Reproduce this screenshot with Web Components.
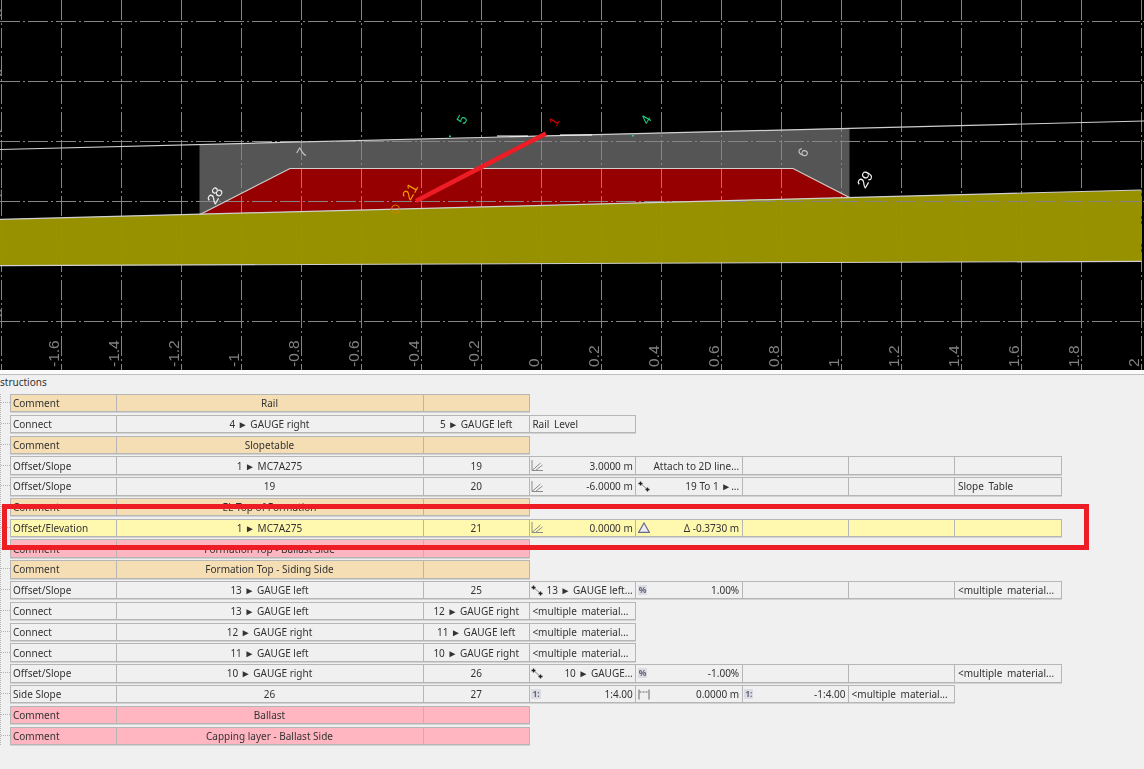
<!DOCTYPE html>
<html>
<head>
<meta charset="utf-8">
<title>Instructions</title>
<style>
  html, body { margin: 0; height: 100%; }
  body {
    background: #f0f0f0;
    overflow: hidden;
    font-family: "Noto Sans", "Open Sans", sans-serif;
  }
</style>
</head>
<body>
<section-viewport></section-viewport>
<instruction-panel heading="structions">
  <instruction-row tone="comment"><instruction-cell kind="first">Comment</instruction-cell><instruction-cell kind="wide">Rail</instruction-cell><instruction-cell></instruction-cell></instruction-row>
  <instruction-row><instruction-cell kind="first">Connect</instruction-cell><instruction-cell kind="wide">4 ► GAUGE right</instruction-cell><instruction-cell>5 ► GAUGE left</instruction-cell><instruction-cell kind="note">Rail Level</instruction-cell></instruction-row>
  <instruction-row tone="comment"><instruction-cell kind="first">Comment</instruction-cell><instruction-cell kind="wide">Slopetable</instruction-cell><instruction-cell></instruction-cell></instruction-row>
  <instruction-row><instruction-cell kind="first">Offset/Slope</instruction-cell><instruction-cell kind="wide">1 ► MC7A275</instruction-cell><instruction-cell>19</instruction-cell><instruction-cell kind="value" icon="slope">3.0000 m</instruction-cell><instruction-cell kind="value">Attach to 2D line...</instruction-cell><instruction-cell></instruction-cell><instruction-cell></instruction-cell><instruction-cell></instruction-cell></instruction-row>
  <instruction-row><instruction-cell kind="first">Offset/Slope</instruction-cell><instruction-cell kind="wide">19</instruction-cell><instruction-cell>20</instruction-cell><instruction-cell kind="value" icon="slope">-6.0000 m</instruction-cell><instruction-cell kind="value" icon="nodes">19 To 1 ►...</instruction-cell><instruction-cell></instruction-cell><instruction-cell></instruction-cell><instruction-cell kind="note">Slope Table</instruction-cell></instruction-row>
  <instruction-row tone="comment"><instruction-cell kind="first">Comment</instruction-cell><instruction-cell kind="wide">EL Top of Formation</instruction-cell><instruction-cell></instruction-cell></instruction-row>
  <instruction-row tone="selected"><instruction-cell kind="first">Offset/Elevation</instruction-cell><instruction-cell kind="wide">1 ► MC7A275</instruction-cell><instruction-cell>21</instruction-cell><instruction-cell kind="value" icon="slope">0.0000 m</instruction-cell><instruction-cell kind="value" icon="delta">Δ -0.3730 m</instruction-cell><instruction-cell></instruction-cell><instruction-cell></instruction-cell><instruction-cell></instruction-cell></instruction-row>
  <instruction-row tone="pink"><instruction-cell kind="first">Comment</instruction-cell><instruction-cell kind="wide">Formation Top - Ballast Side</instruction-cell><instruction-cell></instruction-cell></instruction-row>
  <instruction-row tone="comment"><instruction-cell kind="first">Comment</instruction-cell><instruction-cell kind="wide">Formation Top - Siding Side</instruction-cell><instruction-cell></instruction-cell></instruction-row>
  <instruction-row><instruction-cell kind="first">Offset/Slope</instruction-cell><instruction-cell kind="wide">13 ► GAUGE left</instruction-cell><instruction-cell>25</instruction-cell><instruction-cell kind="value" icon="nodes">13 ► GAUGE left...</instruction-cell><instruction-cell kind="value" icon="percent">1.00%</instruction-cell><instruction-cell></instruction-cell><instruction-cell></instruction-cell><instruction-cell kind="note">&lt;multiple material...</instruction-cell></instruction-row>
  <instruction-row><instruction-cell kind="first">Connect</instruction-cell><instruction-cell kind="wide">13 ► GAUGE left</instruction-cell><instruction-cell>12 ► GAUGE right</instruction-cell><instruction-cell kind="note">&lt;multiple material...</instruction-cell></instruction-row>
  <instruction-row><instruction-cell kind="first">Connect</instruction-cell><instruction-cell kind="wide">12 ► GAUGE right</instruction-cell><instruction-cell>11 ► GAUGE left</instruction-cell><instruction-cell kind="note">&lt;multiple material...</instruction-cell></instruction-row>
  <instruction-row><instruction-cell kind="first">Connect</instruction-cell><instruction-cell kind="wide">11 ► GAUGE left</instruction-cell><instruction-cell>10 ► GAUGE right</instruction-cell><instruction-cell kind="note">&lt;multiple material...</instruction-cell></instruction-row>
  <instruction-row><instruction-cell kind="first">Offset/Slope</instruction-cell><instruction-cell kind="wide">10 ► GAUGE right</instruction-cell><instruction-cell>26</instruction-cell><instruction-cell kind="value" icon="nodes">10 ► GAUGE...</instruction-cell><instruction-cell kind="value" icon="percent">-1.00%</instruction-cell><instruction-cell></instruction-cell><instruction-cell></instruction-cell><instruction-cell kind="note">&lt;multiple material...</instruction-cell></instruction-row>
  <instruction-row><instruction-cell kind="first">Side Slope</instruction-cell><instruction-cell kind="wide">26</instruction-cell><instruction-cell>27</instruction-cell><instruction-cell kind="value" icon="ratio">1:4.00</instruction-cell><instruction-cell kind="value" icon="width">0.0000 m</instruction-cell><instruction-cell kind="value" icon="ratio">-1:4.00</instruction-cell><instruction-cell kind="note">&lt;multiple material...</instruction-cell></instruction-row>
  <instruction-row tone="pink"><instruction-cell kind="first">Comment</instruction-cell><instruction-cell kind="wide">Ballast</instruction-cell><instruction-cell></instruction-cell></instruction-row>
  <instruction-row tone="pink" last><instruction-cell kind="first">Comment</instruction-cell><instruction-cell kind="wide">Capping layer - Ballast Side</instruction-cell><instruction-cell></instruction-cell></instruction-row>
</instruction-panel>

<script>
class SectionViewport extends HTMLElement {
  constructor() {
    super();
    this.attachShadow({ mode: 'open' });
  }

  connectedCallback() {
    this.render();
  }

  render() {
    const vertical = [];
    const axis = [];
    const values = ['', '-1.6', '-1.4', '-1.2', '-1', '-0.8', '-0.6', '-0.4', '-0.2', '0', '0.2', '0.4', '0.6', '0.8', '1', '1.2', '1.4', '1.6', '1.8', '2'];
    values.forEach((value, i) => {
      const x = 1.5 + i * 60;
      vertical.push(`<line x1="${x}" y1="0" x2="${x}" y2="370"/>`);
      if (value) {
        axis.push(`<text transform="translate(${x - 3} 367) rotate(-90)">${value}</text>`);
      }
    });
    const horizontal = [21.5, 81.5, 141.5, 201.5, 321.5]
      .map((y) => `<line x1="0" y1="${y}" x2="1144" y2="${y}"/>`)
      .join('');
    // clipped elevation labels on the left edge
    const edge = [[13, '8'], [73, '6'], [133, '4'], [193, '2'], [313, '8']]
      .map(([y, v]) => `<text transform="translate(2 ${y}) rotate(-90)" text-anchor="middle">${v}</text>`)
      .join('');

    this.shadowRoot.innerHTML = `
      <style>
        :host { display: block; height: 370px; background: #000; overflow: hidden; }
        svg { display: block; width: 1144px; height: 370px; filter: blur(.35px); }
        .grid line { stroke: #858585; stroke-width: 1; stroke-dasharray: 20 3 2 3; }
        .axis text { fill: #808080; font: 15.5px "Liberation Sans", sans-serif; }
        .label { font: 15px "Liberation Sans", sans-serif; }
        .label .small { font-size: 14px; }
      </style>
      <svg viewBox="0 0 1144 370" xmlns="http://www.w3.org/2000/svg">
        <polygon fill="#555555" points="199.5,144.5 849.5,128 849.5,197.5 199.5,214"/>
        <polygon fill="#970000" points="201,214 290,168.5 793,168.5 849.5,197.5"/>
        <polygon fill="#979100" points="0,219.3 199.5,214 849.5,197.5 1141.5,190 1141.5,261.3 0,265.7"/>
        <g class="grid">${vertical.join('')}${horizontal}</g>
        <g fill="none" stroke="#d0d0d0" stroke-width="1.2">
          <polyline points="0,149.5 1144,121"/>
          <polyline points="0,219.3 1141.5,190"/>
          <polyline points="0,265.7 1141.5,261.3"/>
          <polyline points="200,214.5 290,168.5 793,168.5 849.5,197.5"/>
        </g>
        <g stroke="#fff" stroke-width="1">
          <line x1="497" y1="136" x2="528" y2="136"/>
          <line x1="560" y1="135" x2="592" y2="135"/>
        </g>
        <rect x="449" y="135.5" width="2" height="1.5" fill="#20d080"/>
        <rect x="632" y="135" width="2" height="1.5" fill="#20d080"/>
        <g class="axis">${axis.join('')}${edge}</g>
        <line x1="416" y1="201" x2="546" y2="133.5" stroke="#ee1c25" stroke-width="4.5"/>
        <circle cx="395.5" cy="209" r="4" fill="none" stroke="#d98200" stroke-width="1"/>
        <g class="label">
          <text transform="translate(216 196) rotate(-60)" text-anchor="middle" dominant-baseline="middle" fill="#f0f0f0">28</text>
          <text class="small" transform="translate(303 153) rotate(-60)" text-anchor="middle" dominant-baseline="middle" fill="#c8c8c8">7</text>
          <text transform="translate(411 192) rotate(-60)" text-anchor="middle" dominant-baseline="middle" fill="#f29a00">21</text>
          <text class="small" transform="translate(463 120) rotate(-60)" text-anchor="middle" dominant-baseline="middle" fill="#20d080">5</text>
          <text class="small" transform="translate(555 122) rotate(-60)" text-anchor="middle" dominant-baseline="middle" fill="#c80000">1</text>
          <text class="small" transform="translate(647 120) rotate(-60)" text-anchor="middle" dominant-baseline="middle" fill="#20d080">4</text>
          <text class="small" transform="translate(804 153) rotate(-60)" text-anchor="middle" dominant-baseline="middle" fill="#c8c8c8">6</text>
          <text transform="translate(866 180) rotate(-60)" text-anchor="middle" dominant-baseline="middle" fill="#f0f0f0">29</text>
        </g>
      </svg>
    `;
  }
}

class InstructionPanel extends HTMLElement {
  constructor() {
    super();
    this.attachShadow({ mode: 'open' });
    this.shadowRoot.innerHTML = `
      <style>
        :host {
          display: block;
          position: relative;
          height: 399px;
          overflow: hidden;
          background: #f0f0f0;
          border-top: 4px solid #fbfbfb;
          box-sizing: border-box;
          font-size: 10px;
          color: #333;
        }
        .rule { height: 1px; background: #bdbdbd; }
        h2 {
          margin: 0;
          height: 19px;
          font: inherit;
          line-height: 15px;
        }
        .list {
          display: flex;
          flex-direction: column;
          gap: 2.4px;
          border-left: 1px dotted #b4b4b4;
          filter: blur(.35px);
        }
        /* the red mark-up drawn over the selected row */
        .mark {
          position: absolute;
          left: 2px;
          top: 130px;
          width: 1087px;
          height: 46px;
          box-sizing: border-box;
          border: 5px solid #ee1c25;
          pointer-events: none;
        }
      </style>
      <div class="rule"></div>
      <h2 id="heading"></h2>
      <div class="list"><slot></slot></div>
      <div class="mark"></div>
    `;
  }

  connectedCallback() {
    this.shadowRoot.querySelector('#heading').textContent = this.getAttribute('heading');
  }
}

class InstructionRow extends HTMLElement {
  constructor() {
    super();
    this.attachShadow({ mode: 'open' });
    this.shadowRoot.innerHTML = `
      <style>
        :host {
          display: flex;
          height: 18.4px;
          --cell-bg: #f0f0f0;
          --cell-line: #b6b6b6;
        }
        :host([tone="comment"]) { --cell-bg: #f5deb3; }
        :host([tone="pink"]) { --cell-bg: #ffb6c1; }
        :host([tone="selected"]) { --cell-bg: #fff9b0; }
        .stub {
          flex: 0 0 8.5px;
          height: 50%;
          box-sizing: border-box;
          border-bottom: 1px dotted #b4b4b4;
        }
        .cells { display: flex; }
      </style>
      <div class="stub"></div>
      <div class="cells"><slot></slot></div>
    `;
  }
}

const CELL_ICONS = {
  slope: `<svg width="12" height="11" viewBox="0 0 12 11" fill="none" stroke="#8b8b8b"><path d="M1 0v10.5H12M1 10.5L9.5 3M4.5 10.5L11.5 5"/></svg>`,
  nodes: `<svg width="12" height="11" viewBox="0 0 12 11" fill="none"><path d="M2.5 2.5l7 6" stroke="#8a8a8a"/><path d="M2.5.5v4M.5 2.5h4M9.5 6.5v4M7.5 8.5h4" stroke="#222" stroke-width="1.3"/></svg>`,
  delta: `<svg width="12" height="11" viewBox="0 0 12 11"><path d="M6 1L11.3 10.3H.7z" fill="#ecebf5" stroke="#6a6a88" stroke-width="1.2"/></svg>`,
  width: `<svg width="12" height="11" viewBox="0 0 12 11" fill="none" stroke="#666"><path d="M1 .5v10M11 .5v10"/><path d="M1.5 3h9" stroke-dasharray="2 1"/></svg>`,
  percent: `<span class="glyph">%</span>`,
  ratio: `<span class="glyph">1:</span>`,
};

class InstructionCell extends HTMLElement {
  constructor() {
    super();
    this.attachShadow({ mode: 'open' });
    this.shadowRoot.innerHTML = `
      <style>
        :host {
          display: flex;
          align-items: center;
          justify-content: center;
          flex: 0 0 auto;
          box-sizing: border-box;
          width: 107.4px;
          height: 100%;
          margin-right: -1px;
          padding: 0 2.5px;
          background: var(--cell-bg);
          border: 1px solid var(--cell-line);
          box-shadow: 0 1px 0 #d2d2d2;
          white-space: nowrap;
          overflow: hidden;
          position: relative;
        }
        :host([kind="first"]) { justify-content: flex-start; width: 107px; }
        :host([kind="wide"]) { width: 308px; }
        :host([kind="value"]) { justify-content: flex-end; }
        :host([kind="note"]) { justify-content: flex-start; word-spacing: 2px; }
        .icon { margin: 0 auto 0 -1px; display: flex; align-items: center; flex: none; }
        .icon svg { display: block; }
        .glyph {
          display: block;
          padding: 0 1px;
          background: #dcdce4;
          color: #66667a;
          font-size: 8.5px;
          font-weight: 700;
          line-height: 10px;
        }
      </style>
      <span class="icon" id="icon"></span>
      <slot></slot>
    `;
  }

  connectedCallback() {
    const icon = this.shadowRoot.querySelector('#icon');
    const name = this.getAttribute('icon');
    if (name) {
      icon.innerHTML = CELL_ICONS[name];
    } else {
      icon.remove();
    }
  }
}

customElements.define('section-viewport', SectionViewport);
customElements.define('instruction-panel', InstructionPanel);
customElements.define('instruction-row', InstructionRow);
customElements.define('instruction-cell', InstructionCell);
</script>
</body>
</html>
